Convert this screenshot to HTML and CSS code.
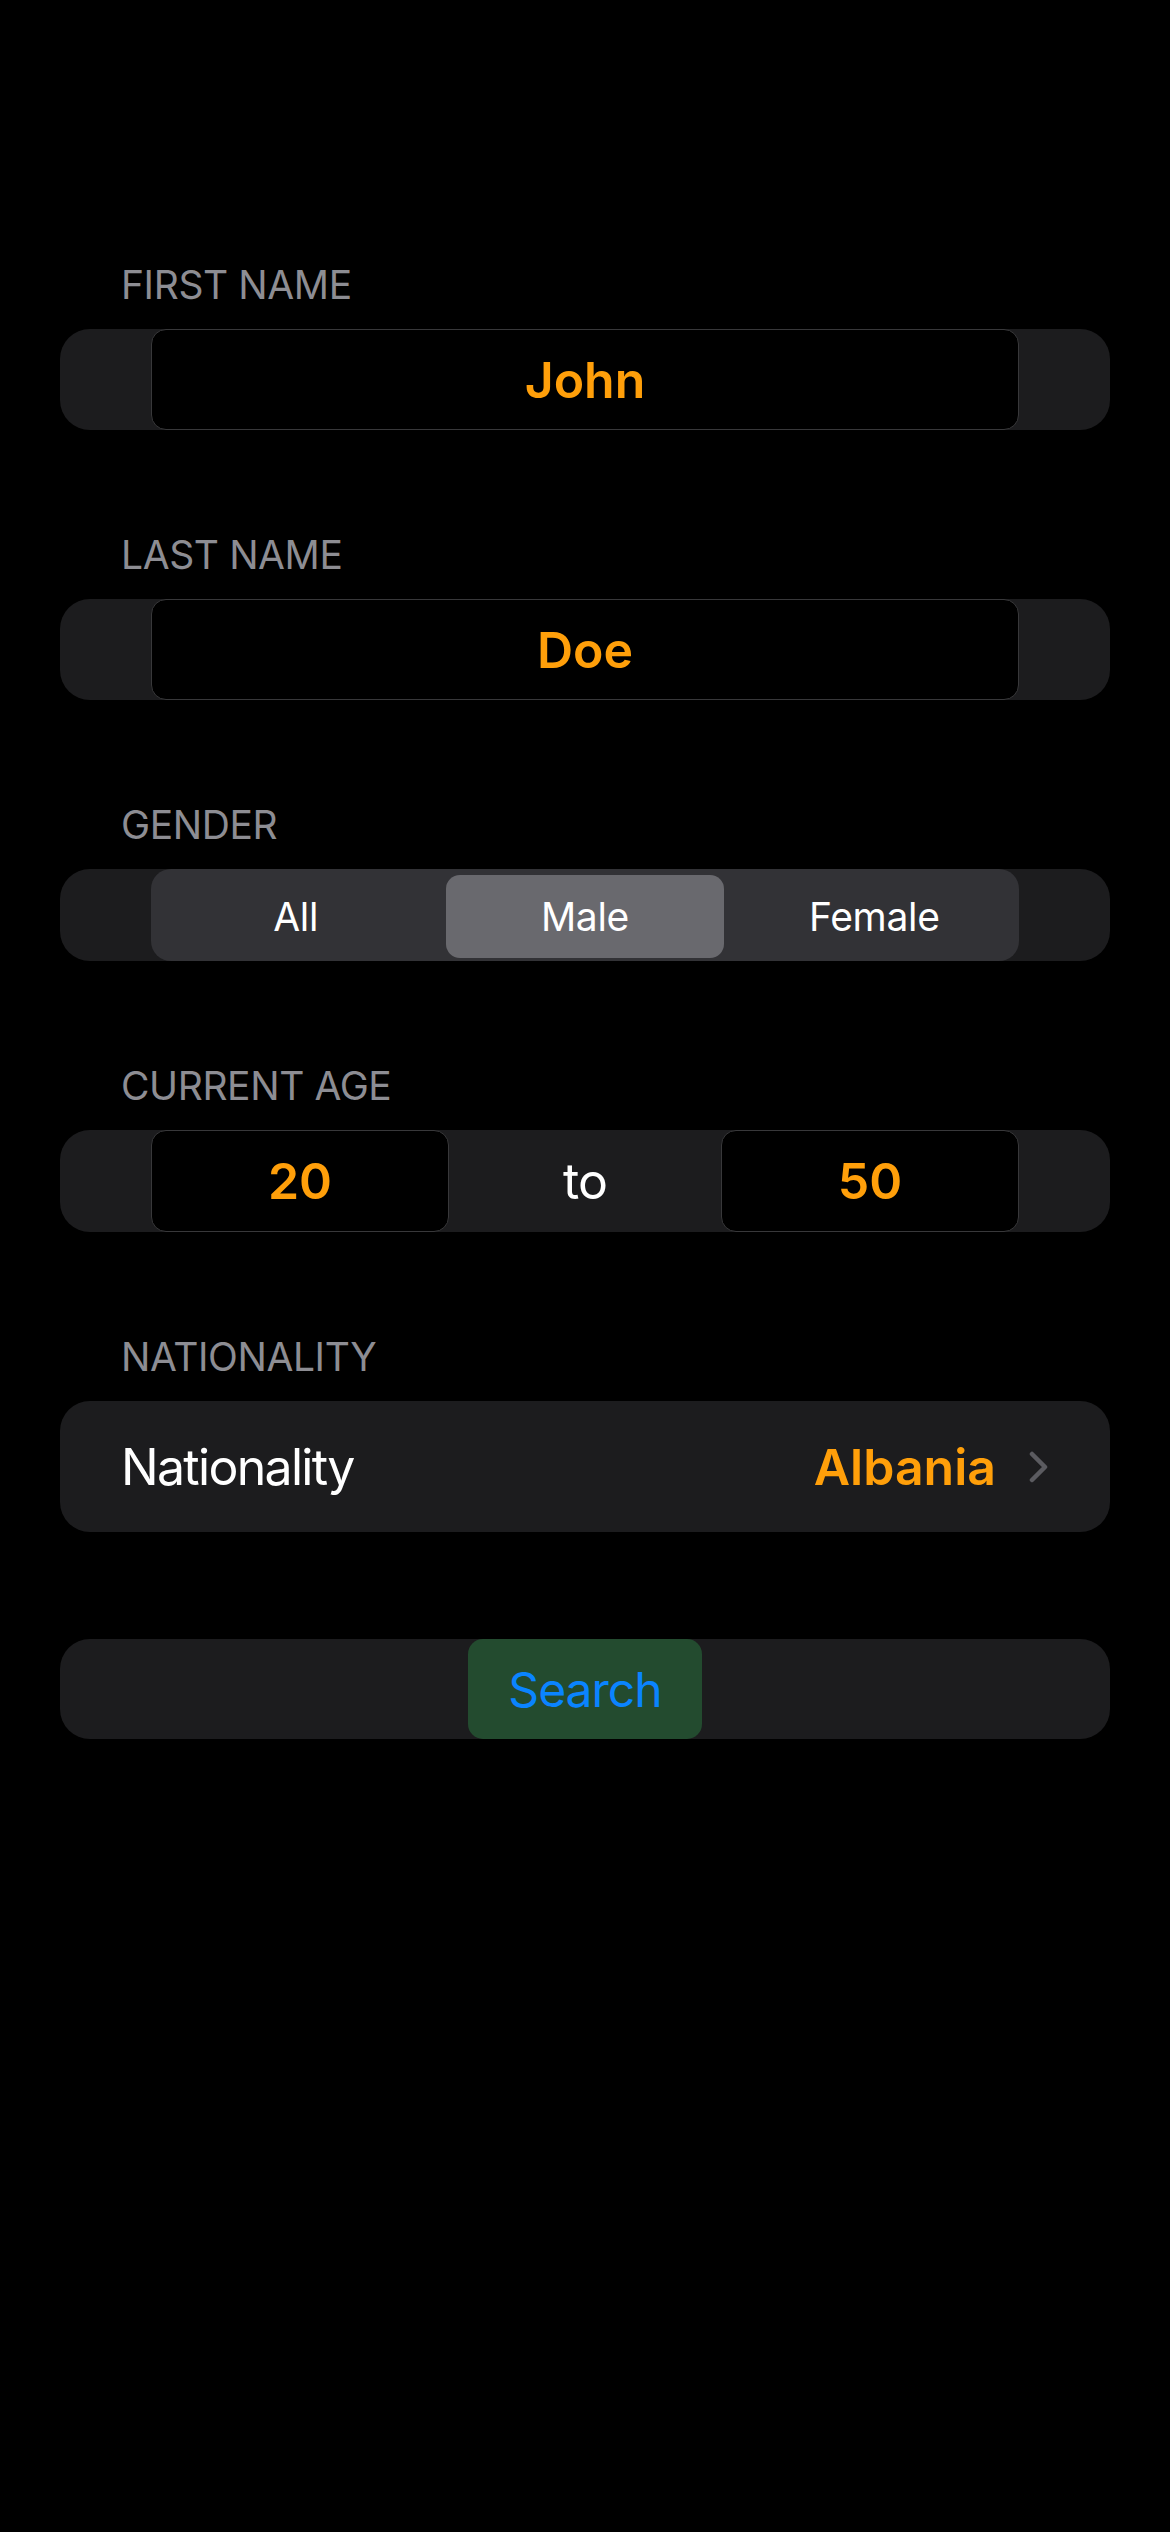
FILE: index.html
```html
<!DOCTYPE html>
<html lang="en">
<head>
<meta charset="utf-8">
<title>Search Form</title>
<link rel="stylesheet" href="styles.css">
</head>
<body>
<main class="form">
  <section class="group">
    <div class="label">FIRST NAME</div>
    <div class="card card-field">
      <div class="field">John</div>
    </div>
  </section>

  <section class="group">
    <div class="label">LAST NAME</div>
    <div class="card card-field">
      <div class="field">Doe</div>
    </div>
  </section>

  <section class="group">
    <div class="label">GENDER</div>
    <div class="card card-seg">
      <div class="segmented">
        <div class="seg">All</div>
        <div class="seg seg-active">Male</div>
        <div class="seg">Female</div>
      </div>
    </div>
  </section>

  <section class="group">
    <div class="label">CURRENT AGE</div>
    <div class="card card-age">
      <div class="field field-age">20</div>
      <div class="to">to</div>
      <div class="field field-age">50</div>
    </div>
  </section>

  <section class="group">
    <div class="label">NATIONALITY</div>
    <div class="card card-row">
      <div class="row-title">Nationality</div>
      <div class="row-value">
        <span class="value">Albania</span>
        <svg class="chevron" width="19" height="32" viewBox="0 0 19 32" aria-hidden="true">
          <polyline points="3,3 16,16 3,29" fill="none" stroke="#5b5b60" stroke-width="4.5" stroke-linecap="round" stroke-linejoin="round"/>
        </svg>
      </div>
    </div>
  </section>

  <section class="group group-search">
    <div class="card card-search">
      <div class="search-btn">Search</div>
    </div>
  </section>
</main>
</body>
</html>
```

FILE: styles.css
```css
html, body {
  margin: 0;
  padding: 0;
  background: #000;
}

body {
  width: 1170px;
  min-height: 2532px;
  font-family: Inter, "Noto Sans", "Liberation Sans", sans-serif;
  color: #fff;
}

.form {
  padding: 261px 60px 0;
  display: flex;
  flex-direction: column;
  gap: 101px;
}

.group {
  display: flex;
  flex-direction: column;
}

.group-search {
  margin-top: 6px;
}

.label {
  font-size: 39px;
  line-height: 48px;
  color: #8d8d93;
  padding-left: 61px;
  margin-bottom: 20px;
  letter-spacing: -0.4px;
}

.card {
  background: #1c1c1e;
  border-radius: 30px;
  box-sizing: border-box;
}

.card-field {
  height: 101px;
  padding: 0 91px;
  display: flex;
}

.field {
  flex: 1;
  box-sizing: border-box;
  background: #000;
  border: 1.5px solid #38383a;
  border-radius: 15px;
  display: flex;
  align-items: center;
  justify-content: center;
  color: #ff9f0a;
  font-size: 50px;
  font-weight: 600;
}

.card-seg {
  height: 92px;
  padding: 0 91px;
  display: flex;
}

.segmented {
  flex: 1;
  display: grid;
  grid-template-columns: 1fr 1fr 1fr;
  background: #323236;
  border-radius: 20px;
}

.seg {
  display: flex;
  align-items: center;
  justify-content: center;
  font-size: 39px;
  letter-spacing: -0.3px;
  color: #fff;
  border-radius: 14px;
  margin: 6px 6px 3px;
}

.seg-active {
  background: #69696e;
}

.card-age {
  height: 102px;
  padding: 0 91px;
  display: flex;
}

.field-age {
  flex: 0 0 298px;
}

.to {
  flex: 1;
  display: flex;
  align-items: center;
  justify-content: center;
  font-size: 50px;
  letter-spacing: -1px;
  color: #fff;
}

.card-row {
  height: 131px;
  padding: 0 62px 0 61px;
  display: flex;
  align-items: center;
  justify-content: space-between;
}

.row-title {
  font-size: 50px;
  letter-spacing: -1.7px;
  color: #fff;
}

.row-value {
  display: flex;
  align-items: center;
  gap: 33px;
}

.value {
  font-size: 50px;
  font-weight: 600;
  color: #ff9f0a;
}

.chevron {
  display: block;
}

.card-search {
  height: 100px;
  display: flex;
  justify-content: center;
}

.search-btn {
  width: 234px;
  background: #234b2f;
  border-radius: 15px;
  display: flex;
  align-items: center;
  justify-content: center;
  font-size: 48px;
  letter-spacing: -1px;
  color: #0a84ff;
}
```
